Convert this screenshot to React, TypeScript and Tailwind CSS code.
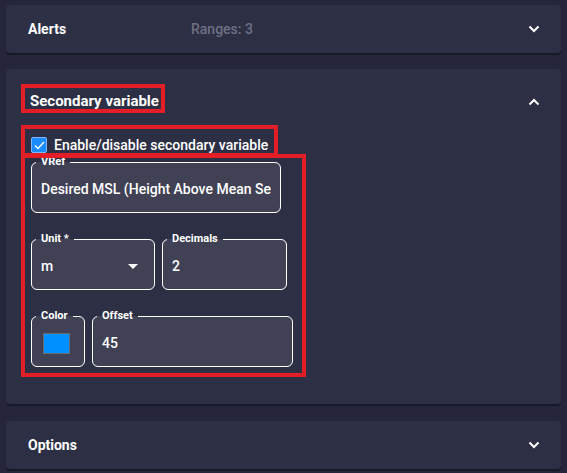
import type { ReactNode } from 'react';

function Chevron({ up = false }: { up?: boolean }) {
  return (
    <svg width="12" height="8" viewBox="0 0 12 8" className="text-white">
      <polyline
        points={up ? '1.5,6.5 6,2 10.5,6.5' : '1.5,1.5 6,6 10.5,1.5'}
        fill="none"
        stroke="currentColor"
        strokeWidth="2"
      />
    </svg>
  );
}

function Field({ label, width, children }: { label: string; width: string; children: ReactNode }) {
  return (
    <fieldset className={`${width} shrink-0 rounded-md border border-white bg-[#404155]`}>
      <legend className="ml-[4px] px-[5px] text-[11px] font-bold leading-[12px] text-white">{label}</legend>
      <div className="flex h-[44px] items-center px-[9px] pb-[2px] text-[14px] font-medium text-white">
        {children}
      </div>
    </fieldset>
  );
}

function CollapsedCard({ title, extra }: { title: string; extra?: string }) {
  return (
    <div className="flex h-[48px] items-center rounded-[4px] bg-[#2d2f45] pl-[22px] pr-[21px] shadow-[0_2px_1px_rgba(0,0,0,0.35)]">
      <span className="w-[163px] text-[14px] font-bold text-white">{title}</span>
      {extra && <span className="text-[14px] font-medium text-[#6e7084]">{extra}</span>}
      <span className="ml-auto flex w-[12px] items-center">
        <Chevron />
      </span>
    </div>
  );
}

export default function App() {
  return (
    <div
      className="min-h-screen w-full bg-[#25263b] px-[6px] pt-[5px] text-white"
      style={{ fontFamily: 'Roboto, "Liberation Sans", sans-serif' }}
    >
      <CollapsedCard title="Alerts" extra="Ranges: 3" />

      {/* Secondary variable — expanded */}
      <div className="relative mt-[16px] rounded-[4px] bg-[#2d2f45] pb-[37px] pl-[25px] shadow-[0_2px_1px_rgba(0,0,0,0.35)]">
        <div className="flex h-[65px] items-center pr-[21px]">
          <span className="-ml-[1px] text-[15px] font-bold">Secondary variable</span>
          <span className="ml-auto flex w-[12px] items-center">
            <Chevron up />
          </span>
        </div>

        <label className="flex h-[22px] items-center">
          <span className="flex h-4 w-4 items-center justify-center rounded-[2px] border border-[#7fb8ff] bg-[#1a8cff]">
            <svg width="11" height="9" viewBox="0 0 11 9">
              <polyline points="1,4.5 4,7.5 10,1" fill="none" stroke="white" strokeWidth="1.4" />
            </svg>
          </span>
          <span className="ml-[7px] text-[14px] font-medium">Enable/disable secondary variable</span>
        </label>

        <div className="flex flex-col gap-[20px]">
          <Field label="VRef" width="w-[250px]">
            <span className="whitespace-nowrap overflow-hidden">Desired MSL (Height Above Mean Se</span>
          </Field>

          <div className="flex gap-[7px]">
            <Field label="Unit *" width="w-[124px]">
              <span>m</span>
              <svg width="10" height="5" viewBox="0 0 10 5" className="ml-auto mr-[7px]">
                <polygon points="0,0 10,0 5,5" fill="white" />
              </svg>
            </Field>
            <Field label="Decimals" width="w-[125px]">
              <span>2</span>
            </Field>
          </div>

          <div className="flex gap-[7px]">
            <Field label="Color" width="w-[54px]">
              <span className="ml-[2px] h-[21px] w-[27px] border border-[#6b6b6b] bg-[#0091ff]" />
            </Field>
            <Field label="Offset" width="w-[201px]">
              <span>45</span>
            </Field>
          </div>
        </div>

        {/* annotation boxes */}
        <div className="pointer-events-none absolute left-[15px] top-[15px] h-[29px] w-[144px] border-4 border-[#e41e26]" />
        <div className="pointer-events-none absolute left-[15px] top-[56px] h-[32px] w-[257px] border-4 border-[#e41e26]" />
        <div className="pointer-events-none absolute left-[15px] top-[85px] h-[223px] w-[285px] border-4 border-[#e41e26]" />
      </div>

      <div className="mt-[17px]">
        <CollapsedCard title="Options" />
      </div>
    </div>
  );
}
